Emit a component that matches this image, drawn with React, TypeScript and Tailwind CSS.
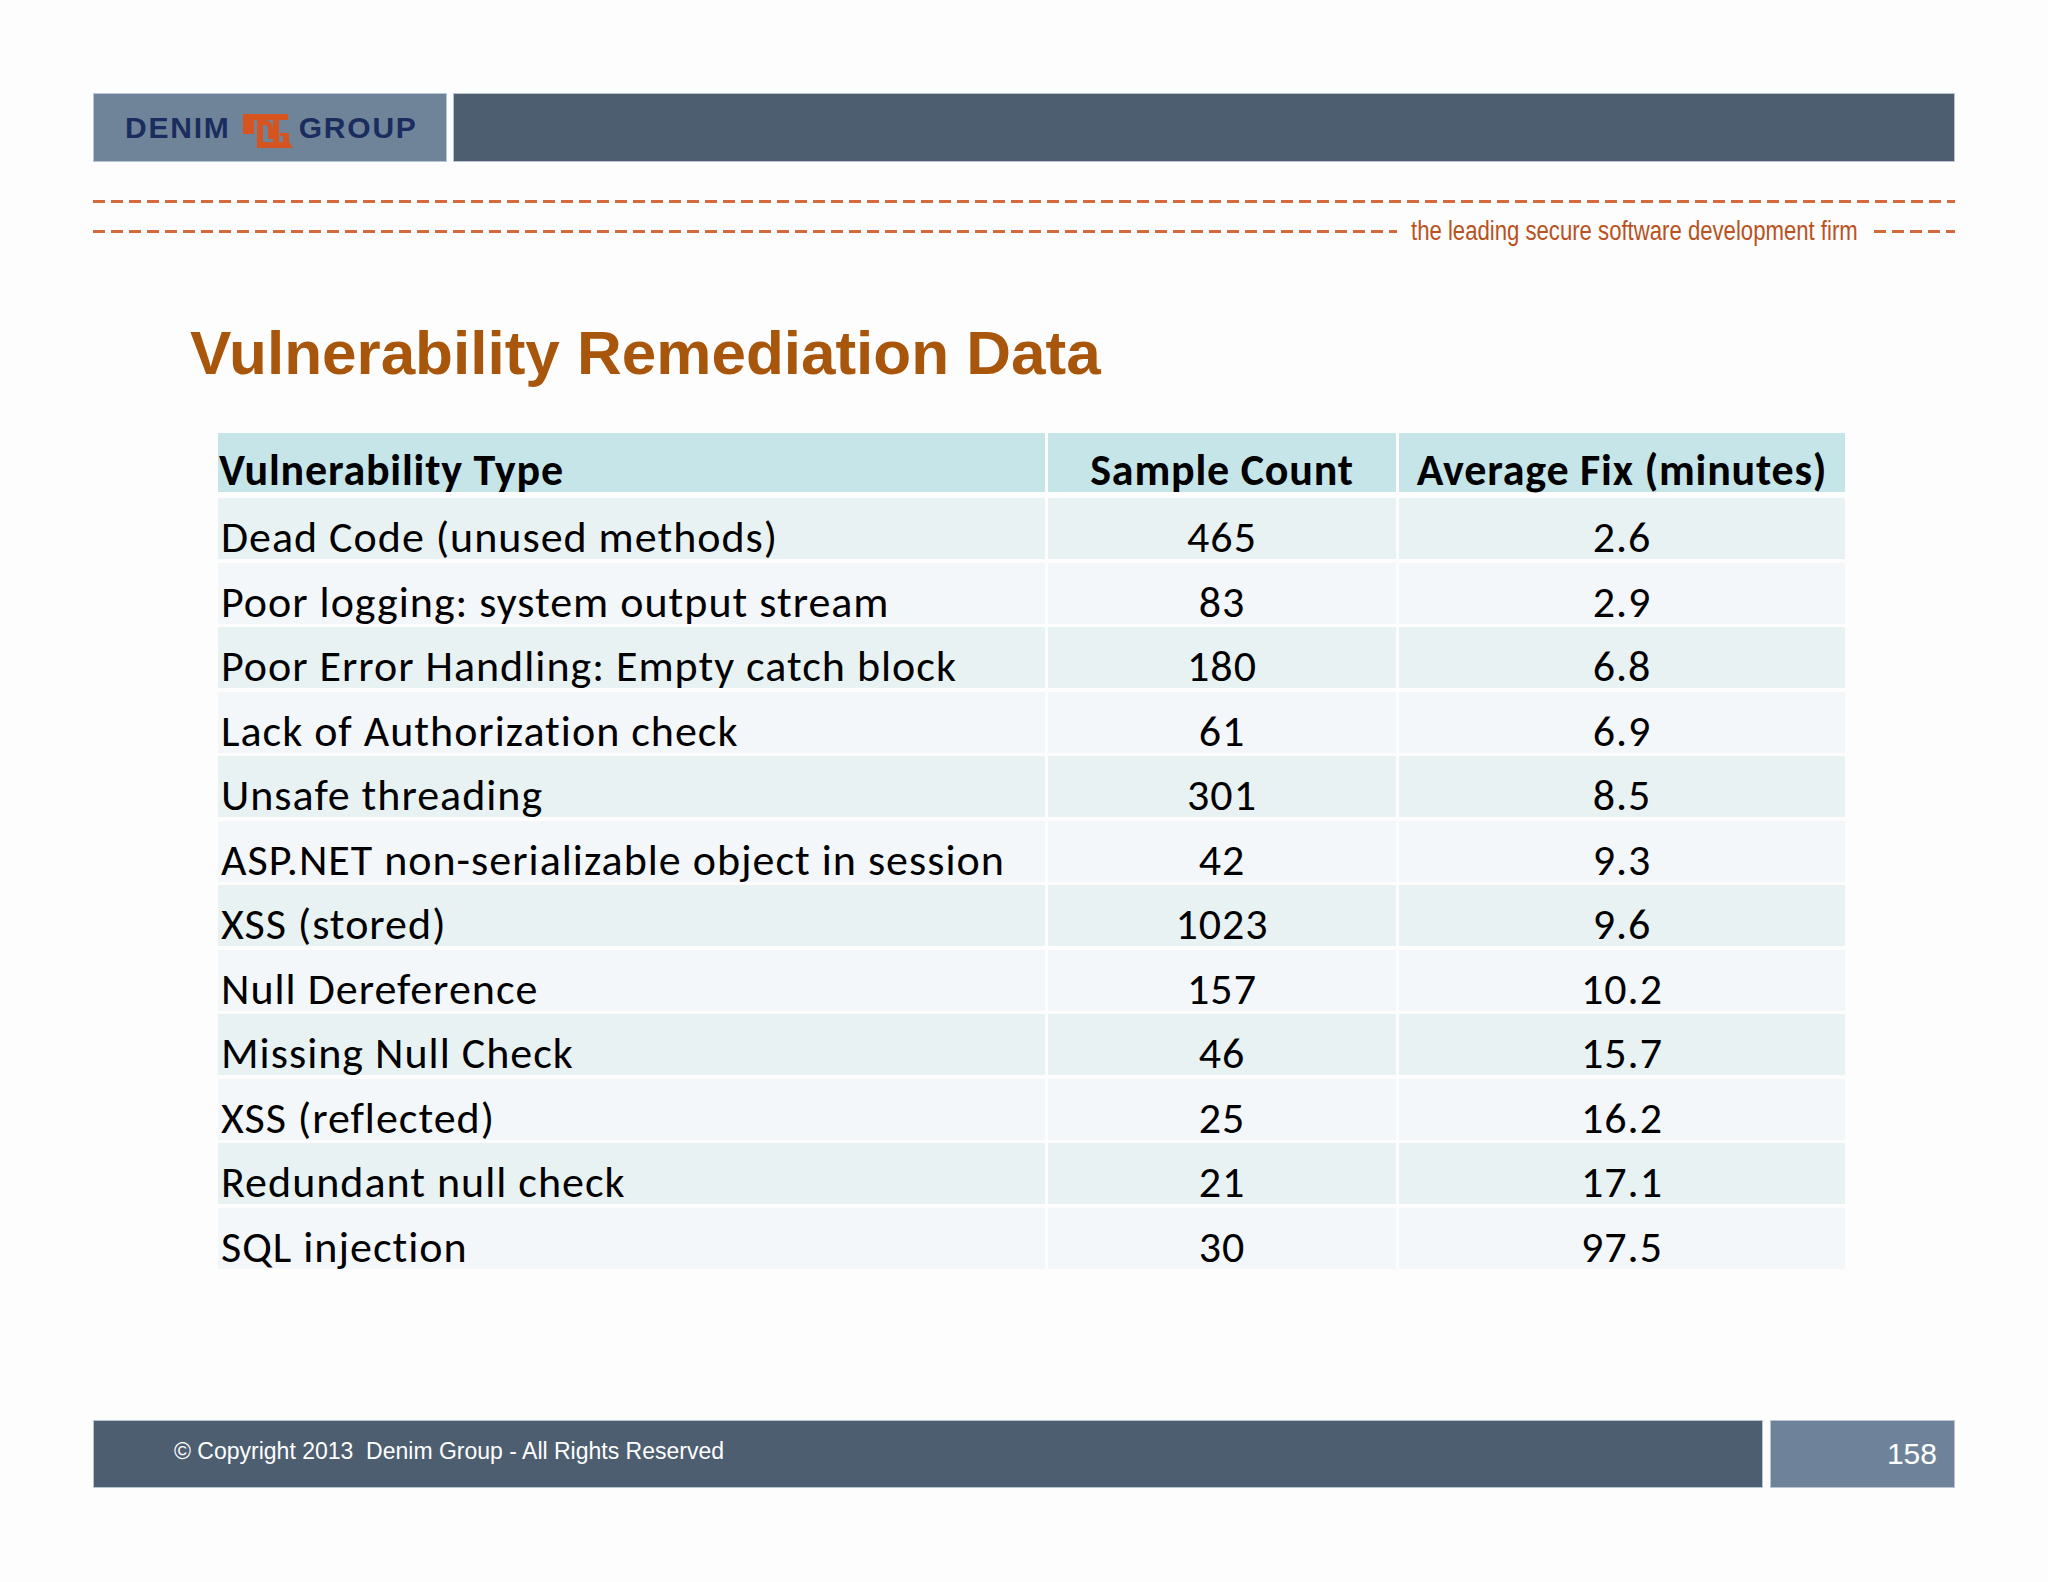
import React from "react";

const rows: [string, string, string][] = [
  ["Dead Code (unused methods)", "465", "2.6"],
  ["Poor logging: system output stream", "83", "2.9"],
  ["Poor Error Handling: Empty catch block", "180", "6.8"],
  ["Lack of Authorization check", "61", "6.9"],
  ["Unsafe threading", "301", "8.5"],
  ["ASP.NET non-serializable object in session", "42", "9.3"],
  ["XSS (stored)", "1023", "9.6"],
  ["Null Dereference", "157", "10.2"],
  ["Missing Null Check", "46", "15.7"],
  ["XSS (reflected)", "25", "16.2"],
  ["Redundant null check", "21", "17.1"],
  ["SQL injection", "30", "97.5"],
];

function DGIcon() {
  return (
    <svg width="50" height="34" viewBox="0 0 50 34" className="shrink-0">
      <g fill="#d6541f">
        <rect x="0" y="0" width="45" height="6" />
        <rect x="0" y="0" width="11" height="20" />
        <rect x="14" y="6" width="6" height="28" />
        <path d="M20 6 H22 C27 6 30 10 30 16 V25 H25 V16 C25 12 24 11 22 11 H20 Z" />
        <rect x="30" y="0" width="6" height="30" />
        <rect x="40" y="20" width="6" height="10" />
        <rect x="37" y="19" width="9" height="3" />
        <path d="M14 28 H46 L50 34 H14 Z" />
      </g>
    </svg>
  );
}

export default function App() {
  const dash =
    "h-[3px] bg-[repeating-linear-gradient(90deg,#d36a3d_0px,#d36a3d_12px,transparent_12px,transparent_18px)]";
  return (
    <div className="w-[2048px] h-[1582px] bg-[#fdfdfd] overflow-hidden">
      <div className="pt-[93px] px-[93px] flex flex-col">
        {/* Header */}
        <div className="flex h-[69px] gap-[6px]">
          <div className="w-[354px] bg-[#6f8499] border border-[#b9c5d1] flex items-center pl-[31px]">
            <span
              className="text-[30px] font-bold tracking-[1.8px] text-[#1b2c5f] leading-none"
              style={{ fontFamily: "'Liberation Sans', Arial, sans-serif" }}
            >
              DENIM
            </span>
            <div className="ml-[12px] mr-[6px] mt-[6px]">
              <DGIcon />
            </div>
            <span
              className="text-[30px] font-bold tracking-[1.8px] text-[#1b2c5f] leading-none"
              style={{ fontFamily: "'Liberation Sans', Arial, sans-serif" }}
            >
              GROUP
            </span>
          </div>
          <div className="flex-1 bg-[#4d5e70] border border-[#b9c5d1]" />
        </div>

        {/* Dashed lines */}
        <div className={`mt-[38px] ${dash}`} />
        <div className="mt-[13px] h-[30px] flex items-center">
          <div className={`flex-1 ${dash}`} />
          <div className="w-[447px] ml-[14px] mr-[16px] h-[30px] flex items-center">
            <span
              className="inline-block origin-left scale-x-[0.82] whitespace-nowrap text-[27px] leading-[30px] text-[#b9521e]"
              style={{ fontFamily: "'Liberation Sans', Arial, sans-serif" }}
            >
              the leading secure software development firm
            </span>
          </div>
          <div className={`w-[81px] ${dash}`} />
        </div>

        {/* Title */}
        <h1
          className="mt-[76px] pl-[97px] text-[62px] leading-[62px] font-bold text-[#a8560c]"
          style={{ fontFamily: "'Liberation Sans', Arial, sans-serif" }}
        >
          Vulnerability Remediation Data
        </h1>

        {/* Table */}
        <div
          className="mt-[49px] ml-[125px] w-[1627px] flex flex-col text-black"
          style={{ fontFamily: "Carlito, Lato, sans-serif" }}
        >
          <div className="grid grid-cols-[827px_348px_446px] gap-x-[3px] h-[59px] font-bold text-[44px] leading-[0.97] tracking-[0.8px]">
            <div className="bg-[#c6e5e8] flex items-end pl-[1px]">Vulnerability Type</div>
            <div className="bg-[#c6e5e8] flex items-end justify-center">Sample Count</div>
            <div className="bg-[#c6e5e8] flex items-end justify-center">Average Fix (minutes)</div>
          </div>
          <div className="mt-[6px] flex flex-col gap-y-[3.5px]">
            {rows.map((r, i) => {
              const bg = i % 2 === 0 ? "bg-[#e9f2f2]" : "bg-[#f4f7f9]";
              return (
                <div
                  key={i}
                  className="grid grid-cols-[827px_348px_446px] gap-x-[3px] h-[61px] text-[44px] leading-[0.97] tracking-[1px]"
                >
                  <div className={`${bg} flex items-end pl-[3px]`}>{r[0]}</div>
                  <div className={`${bg} flex items-end justify-center`}>{r[1]}</div>
                  <div className={`${bg} flex items-end justify-center`}>{r[2]}</div>
                </div>
              );
            })}
          </div>
        </div>

        {/* Footer */}
        <div
          className="mt-[151px] flex h-[68px] gap-[7px] text-white"
          style={{ fontFamily: "'Liberation Sans', Arial, sans-serif" }}
        >
          <div className="flex-1 bg-[#4d5e70] border border-[#b9c5d1] flex items-start pl-[80px] pt-[19px]">
            <span className="text-[23px] leading-[23px] whitespace-pre">© Copyright 2013  Denim Group - All Rights Reserved</span>
          </div>
          <div className="w-[185px] bg-[#6e8399] border border-[#b9c5d1] flex items-center justify-end pr-[17px]">
            <span className="text-[30px]">158</span>
          </div>
        </div>
      </div>
    </div>
  );
}
